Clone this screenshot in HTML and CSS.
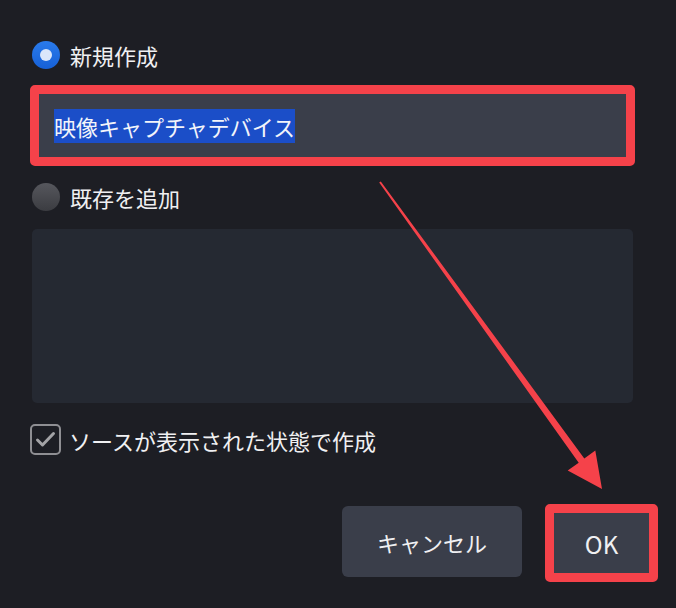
FILE: index.html
```html
<!DOCTYPE html>
<html lang="ja">
<head>
<meta charset="utf-8">
<title>ソースを作成/選択</title>
<link rel="stylesheet" href="styles.css">
</head>
<body>
<div class="dialog">
  <label class="radio-row">
    <span class="radio radio-on"><span class="radio-dot"></span></span>
    <span class="label">新規作成</span>
  </label>
  <div class="highlight-box">
    <div class="text-input"><span class="selected">映像キャプチャデバイス</span></div>
  </div>
  <label class="radio-row">
    <span class="radio radio-off"></span>
    <span class="label">既存を追加</span>
  </label>
  <div class="list-box"></div>
  <label class="check-row">
    <span class="checkbox">
      <svg width="21" height="17" viewBox="0 0 21 17"><path d="M2.5 9 L7.5 14 L18.5 2.5" fill="none" stroke="#a3a3a6" stroke-width="3" stroke-linecap="round" stroke-linejoin="round"/></svg>
    </span>
    <span class="label">ソースが表示された状態で作成</span>
  </label>
  <div class="buttons">
    <button class="btn btn-cancel">キャンセル</button>
    <button class="btn btn-ok">OK</button>
  </div>
</div>
<svg class="arrow" width="676" height="608" viewBox="0 0 676 608">
  <polygon fill="#f5424a" points="380.8,181.4 584.3,458.5 595.3,450.6 602,489 567.7,470.6 578.7,462.7 379.2,182.6"/>
</svg>
</body>
</html>
```
FILE: styles.css
```css
html, body {
  margin: 0;
  padding: 0;
  background: #1d1e24;
}
body {
  width: 676px;
  height: 608px;
  overflow: hidden;
  position: relative;
  font-family: "Noto Sans CJK JP", "Noto Sans", sans-serif;
  font-weight: 400;
  color: #f0f0f2;
}
.dialog {
  padding: 41px 43px 0 32px;
  display: flex;
  flex-direction: column;
}
.radio-row, .check-row {
  display: flex;
  align-items: center;
  height: 28px;
}
.label {
  font-size: 22px;
  line-height: 28px;
  margin-left: 10px;
}
.radio {
  width: 28px;
  height: 28px;
  border-radius: 50%;
  box-sizing: border-box;
  display: flex;
  align-items: center;
  justify-content: center;
  flex: none;
}
.radio-on {
  background: linear-gradient(#2a7bec, #1660d6);
}
.radio-dot {
  width: 12px;
  height: 12px;
  border-radius: 50%;
  background: #dbe7fa;
}
.radio-off {
  background: linear-gradient(#56575d, #3b3c41);
}
.highlight-box {
  margin: 16px -2px 17px -2px;
  border: 9px solid #f5424a;
  border-radius: 5px;
}
.text-input {
  height: 63px;
  background: #3a3e4a;
  display: flex;
  align-items: center;
  padding-left: 15px;
}
.selected {
  background: #1b4ec8;
  color: #f2f4fa;
  font-size: 22px;
  line-height: 34px;
  display: inline-block;
  height: 34px;
}
.list-box {
  margin-top: 18px;
  height: 174px;
  background: #252932;
  border-radius: 5px;
}
.check-row {
  margin-top: 21px;
  margin-left: -2px;
  height: 31px;
}
.checkbox {
  width: 31px;
  height: 31px;
  box-sizing: border-box;
  border: 2px solid #8f8f93;
  border-radius: 5px;
  display: flex;
  align-items: center;
  justify-content: center;
  flex: none;
}
.check-row .label {
  margin-left: 8px;
}
.buttons {
  margin-top: 49px;
  margin-right: -25px;
  display: flex;
  justify-content: flex-end;
  align-items: center;
  gap: 23px;
}
.btn {
  font-family: "Noto Sans CJK JP", "Noto Sans", sans-serif;
  font-weight: 400;
  font-size: 22px;
  color: #f0f0f2;
  background: #3a3e4a;
  border: none;
  padding: 0;
  margin: 0;
}
.btn-cancel {
  width: 180px;
  height: 71px;
  border-radius: 6px;
  margin-bottom: 3px;
}
.btn-ok {
  width: 113px;
  height: 78px;
  border: 9px solid #f5424a;
  border-radius: 5px;
  box-sizing: border-box;
  font-size: 24px;
}
.arrow {
  position: absolute;
  left: 0;
  top: 0;
  pointer-events: none;
}
```
